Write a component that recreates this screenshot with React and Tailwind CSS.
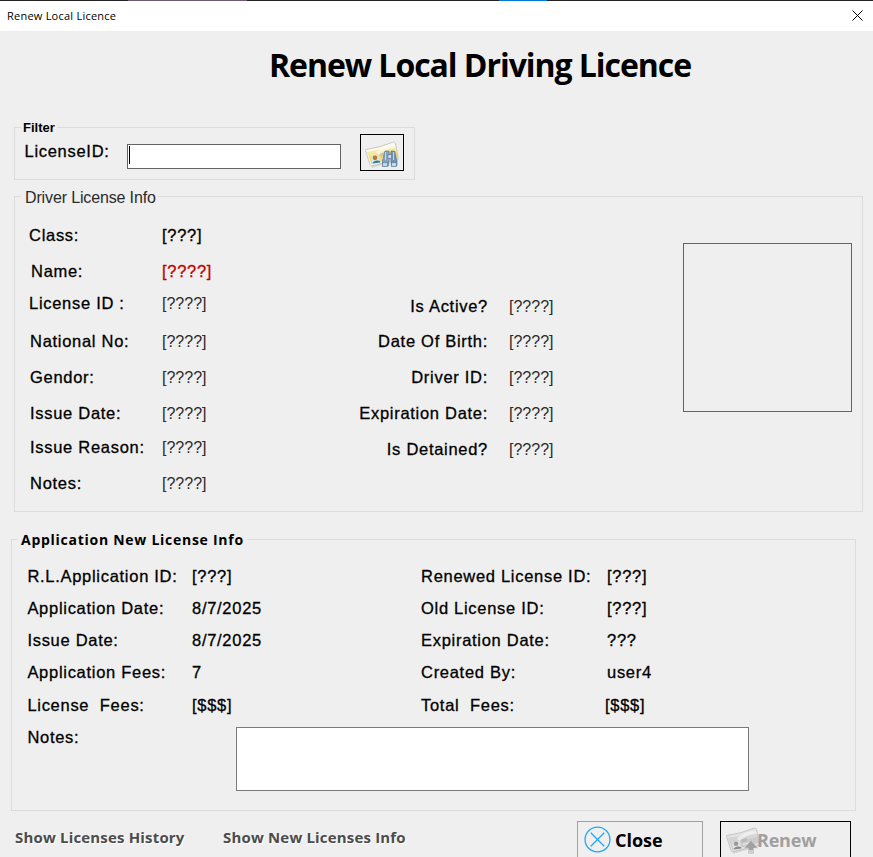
const label = "block h-5 whitespace-pre text-[16.5px] leading-[18px] tracking-[0.71px] [-webkit-text-stroke:0.3px_currentColor]";
const thin = "block h-5 whitespace-pre text-[16px] leading-5 text-[#2a2a2a]";

function CardArt({ gray }) {
  return (
    <g>
      <path d="M3 13 L31 5 L34 22 L7 30 Z" fill="#bdbdbd" opacity=".45" />
      <path d="M.8 11.500 Q15 9.500 28.500 4 Q29.800 3.800 30.300 5.500 L33 20 Q33 21 32 21.500 L7 27.800 Q5.500 28 5 26.500 L.5 12.500 Z" fill={gray ? "#e3e3e3" : "#faf9f0"} stroke={gray ? "#bcbcbc" : "#c0beb4"} strokeWidth=".8" />
      <path d="M2 14 Q17 12 30.500 7.500 L31.300 12 L4 19.500 Z" fill={gray ? "#d4d4d4" : "#f8e7a0"} />
      <path d="M4 18.500 L31.500 12.500 L32.500 19 L6.500 26 Z" fill={gray ? "#cbcbcb" : "#f4d66b"} />
      <path d="M11 14 Q20 7 30 7 L30.700 10 Q20 11 13 17 Z" fill="#fff" opacity=".55" />
      <path d="M5.700 18.500 L13.500 16.500 L15.500 24 L7.500 26 Z" fill={gray ? "#e2e2e2" : "#d4e8e8"} />
      <circle cx="10" cy="19.800" r="2.300" fill={gray ? "#9b9b9b" : "#b9782a"} />
      <path d="M7.300 25.500 Q9.500 21.500 15 23 L15.300 24.500 Z" fill={gray ? "#8a8a8a" : "#3a7a9e"} />
      <path d="M15 15.500 L20.500 14 L21 17 L15.700 18.500 Z" fill={gray ? "#bababa" : "#c5c3b9"} />
      <path d="M17 20.500 L27 18" stroke={gray ? "#eee" : "#fff6cf"} />
    </g>
  );
}

function SearchCardIcon() {
  return (
    <svg width="34" height="32" viewBox="0 0 34 32">
      <CardArt />
      <g stroke="#4f6f90" strokeWidth=".6">
        <path d="M20 13 H24 L24.500 19 L23.500 28 H17.500 V23 Z" fill="#86a3bf" />
        <path d="M26 13 H29.500 L32 23 V28 H26.500 L25.500 19 Z" fill="#7292b2" />
        <rect x="17.500" y="24.500" width="5" height="4" fill="#b9dcf2" />
        <rect x="26.500" y="24.500" width="5" height="4" fill="#b9dcf2" />
        <rect x="23" y="16.500" width="3.500" height="4" fill="#d3dde8" />
        <path d="M20.500 14 V22 M28.500 14 V22" stroke="#c5d5e4" strokeWidth="1" />
      </g>
    </svg>
  );
}

function RenewCardIcon() {
  return (
    <svg width="34" height="32" viewBox="0 0 34 32">
      <CardArt gray />
      <path d="M25 16.500 L31.500 24 H27.500 V29.500 H22.500 V24 H18.500 Z" fill="#a0a0a0" stroke="#c8c8c8" strokeWidth=".5" />
      <path d="M22.500 26 H27.500 V30 H22.500 Z" fill="#d0d0d0" />
    </svg>
  );
}

const left = [
  ["Class:", "[???]", "h-[36px]", "pl-[14px]", label],
  ["Name:", "[????]", "h-[32px]", "pl-[16px]", label + " text-[#c00000]"],
  ["License ID :", "[????]", "h-[38px]", "pl-[14px]", thin],
  ["National No:", "[????]", "h-[36px]", "pl-[15px]", thin],
  ["Gendor:", "[????]", "h-[36px]", "pl-[15px]", thin],
  ["Issue Date:", "[????]", "h-[34px]", "pl-[15px]", thin],
  ["Issue Reason:", "[????]", "h-[36px]", "pl-[15px]", thin],
  ["Notes:", "[????]", "h-[20px]", "pl-[15px]", thin],
];
const middle = [
  ["Is Active?", "h-[35px]"],
  ["Date Of Birth:", "h-[36px]"],
  ["Driver ID:", "h-[36px]"],
  ["Expiration Date:", "h-[36px]"],
  ["Is Detained?", "h-[20px]"],
];
const application = [
  ["R.L.Application ID:", "[???]", "Renewed License ID:", "[???]", "h-[32px]"],
  ["Application Date:", "8/7/2025", "Old License ID:", "[???]", "h-[32px]"],
  ["Issue Date:", "8/7/2025", "Expiration Date:", "???", "h-[32px]"],
  ["Application Fees:", "7", "Created By:", "user4", "h-[33px]"],
  ["License  Fees:", "[$$$]", "Total  Fees:", "[$$$]", "h-[31px]"],
];

export default function App() {
  return (
    <div className="flex h-[857px] w-[873px] flex-col overflow-hidden bg-[#efefef] font-['Liberation_Sans',sans-serif] text-black">
      <div className="flex h-px shrink-0 bg-[#242424]">
        <div className="ml-[128px] w-[119px] bg-[#6b5a70]" />
        <div className="ml-[252px] w-[48px] bg-[#0078d7]" />
      </div>
      <header className="flex h-[30px] shrink-0 items-center justify-between bg-white pl-[7px] pr-[10px]">
        <span className="font-['Open_Sans',sans-serif] text-[11px] leading-[14px] tracking-[0.23px]">Renew Local Licence</span>
        <svg className="-mt-[2px]" width="11" height="11" viewBox="0 0 11 11" stroke="#000" strokeWidth="1"><path d="M.5 .5 L10.500 10.500 M10.500 .5 L.5 10.500" /></svg>
      </header>
      <h1 className="ml-[269px] h-[90px] shrink-0 whitespace-nowrap pt-[14px] font-['Open_Sans',sans-serif] text-[32px] font-bold leading-[40px] tracking-[-1.05px]">Renew Local Driving Licence</h1>

      <fieldset className="ml-[14px] h-[59px] w-[401px] shrink-0 border border-[#dcdcdc]">
        <legend className="ml-[6px] h-[13px] px-[2px] text-[13px] font-bold leading-[13px]">Filter</legend>
        <div className="flex">
          <span className={label + " mt-[8px] w-[102px] shrink-0 pl-[9.5px]"}>LicenseID:</span>
          <div className="ml-[10px] mt-[10px] h-[25px] w-[214px] border border-[#646464] bg-white pl-px pt-px">
            <div className="h-[18px] w-px bg-black" />
          </div>
          <button className="ml-[19px] flex h-[37px] w-[44px] items-center justify-center border border-black pt-[2px]"><SearchCardIcon /></button>
        </div>
      </fieldset>

      <fieldset className="ml-[14px] mt-[7px] h-[325px] w-[849px] shrink-0 border border-[#dcdcdc]">
        <legend className="ml-[6px] h-[19px] pl-[4px] pr-[2px] pt-px text-[16px] leading-[19px] tracking-[-0.14px] text-[#2a2a2a]">Driver License Info</legend>
        <div className="flex pt-[20px]">
          <div className="w-[317px]">
            {left.map(([name, value, height, inset, style]) => (
              <div key={name} className={"flex " + height}>
                <div className={"w-[147px] shrink-0 " + inset}><span className={label}>{name}</span></div>
                <span className={style}>{value}</span>
              </div>
            ))}
          </div>
          <div className="w-[351px] pt-[71px]">
            {middle.map(([name, height]) => (
              <div key={name} className={"flex " + height}>
                <div className="flex w-[156px] shrink-0 justify-end"><span className={label}>{name}</span></div>
                <span className={thin + " ml-[21px]"}>[????]</span>
              </div>
            ))}
          </div>
          <div className="mt-[17px] h-[169px] w-[169px] border border-[#646464]" />
        </div>
      </fieldset>

      <fieldset className="ml-[11px] mt-[18px] h-[281px] w-[845px] shrink-0 border border-[#dcdcdc]">
        <legend className="ml-[6px] h-[19px] px-[3px] font-['Open_Sans',sans-serif] text-[14px] font-bold leading-[19px] tracking-[0.73px]">Application New License Info</legend>
        <div className="pt-[18px]">
          {application.map(([a, b, c, d, height]) => (
            <div key={a} className={"flex " + height}>
              <span className={label + " w-[180px] shrink-0 pl-[15.4px]"}>{a}</span>
              <span className={label + " w-[229px] shrink-0"}>{b}</span>
              <span className={label + " w-[186px] shrink-0"}>{c}</span>
              <span className={label + (c === "Total  Fees:" ? " -ml-[2px]" : "")}>{d}</span>
            </div>
          ))}
          <div className="flex">
            <span className={label + " mt-px w-[224px] shrink-0 pl-[15.4px]"}>Notes:</span>
            <div className="h-[64px] w-[513px] border border-[#7a7a7a] bg-white" />
          </div>
        </div>
      </fieldset>

      <footer className="flex shrink-0 pl-[15px] pt-[10px] font-['Open_Sans',sans-serif] font-bold">
        <a className="mt-[6px] w-[208px] whitespace-nowrap text-[15px] leading-[20px] tracking-[0.17px] text-[#4c4c4c] [text-shadow:1px_1px_#fff]">Show Licenses History</a>
        <a className="mt-[6px] w-[354px] whitespace-nowrap text-[15px] leading-[20px] tracking-[0.17px] text-[#4c4c4c] [text-shadow:1px_1px_#fff]">Show New Licenses Info</a>
        <button className="flex h-[36px] w-[126px] items-center border border-b-0 border-[#a0a0a0] pl-[6px] text-[18px] leading-[24px]">
          <svg width="27" height="27" viewBox="0 0 26 26" fill="none" stroke="#1ea7ee" strokeWidth="1.200"><circle cx="13" cy="13" r="12" /><path d="M6.500 6.500 L19.500 19.500 M19.500 6.500 L6.500 19.500" /></svg>
          <span className="ml-[4px]">Close</span>
        </button>
        <button className="ml-[17px] flex h-[36px] w-[131px] items-center border border-b-0 border-black pl-[5px] text-[18px] leading-[24px] tracking-[-0.2px] text-[#a0a0a0]">
          <RenewCardIcon />
          <span className="-ml-[3px]">Renew</span>
        </button>
      </footer>
    </div>
  );
}
